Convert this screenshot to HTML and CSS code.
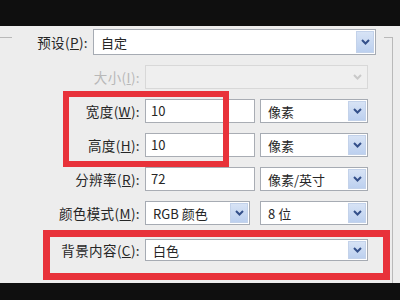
FILE: index.html
```html
<!DOCTYPE html>
<html lang="zh-CN">
<head>
    <meta charset="UTF-8">
    <title>新建</title>
    <link rel="stylesheet" href="styles.css">
</head>
<body>
    <div class="screen">
        <div class="bar"></div>

        <div class="dialog">
            <!-- 分组框边线 -->
            <div class="group-line"></div>

            <div class="row row-preset">
                <label class="label">预设(<u>P</u>):</label>
                <div class="select">
                    <span class="value">自定</span>
                    <span class="arrow"><svg width="9" height="6" viewBox="0 0 9 6"><path d="M1 1 L4.5 4.5 L8 1" /></svg></span>
                </div>
            </div>

            <div class="row">
                <label class="label disabled">大小(<u>I</u>):</label>
                <div class="select wide disabled">
                    <span class="value"></span>
                    <span class="arrow"><svg width="9" height="6" viewBox="0 0 9 6"><path d="M1 1 L4.5 4.5 L8 1" /></svg></span>
                </div>
            </div>

            <div class="row">
                <label class="label">宽度(<u>W</u>):</label>
                <div class="input">10</div>
                <div class="select unit">
                    <span class="value">像素</span>
                    <span class="arrow"><svg width="9" height="6" viewBox="0 0 9 6"><path d="M1 1 L4.5 4.5 L8 1" /></svg></span>
                </div>
            </div>

            <div class="row">
                <label class="label">高度(<u>H</u>):</label>
                <div class="input">10</div>
                <div class="select unit">
                    <span class="value">像素</span>
                    <span class="arrow"><svg width="9" height="6" viewBox="0 0 9 6"><path d="M1 1 L4.5 4.5 L8 1" /></svg></span>
                </div>
            </div>

            <div class="row">
                <label class="label">分辨率(<u>R</u>):</label>
                <div class="input">72</div>
                <div class="select unit">
                    <span class="value">像素/英寸</span>
                    <span class="arrow"><svg width="9" height="6" viewBox="0 0 9 6"><path d="M1 1 L4.5 4.5 L8 1" /></svg></span>
                </div>
            </div>

            <div class="row">
                <label class="label">颜色模式(<u>M</u>):</label>
                <div class="select mode">
                    <span class="value">RGB 颜色</span>
                    <span class="arrow"><svg width="9" height="6" viewBox="0 0 9 6"><path d="M1 1 L4.5 4.5 L8 1" /></svg></span>
                </div>
                <div class="select unit">
                    <span class="value">8 位</span>
                    <span class="arrow"><svg width="9" height="6" viewBox="0 0 9 6"><path d="M1 1 L4.5 4.5 L8 1" /></svg></span>
                </div>
            </div>

            <div class="row row-bg">
                <label class="label">背景内容(<u>C</u>):</label>
                <div class="select wide">
                    <span class="value">白色</span>
                    <span class="arrow"><svg width="9" height="6" viewBox="0 0 9 6"><path d="M1 1 L4.5 4.5 L8 1" /></svg></span>
                </div>
            </div>

            <!-- 红色标注框 -->
            <div class="mark mark-size"></div>
            <div class="mark mark-bg"></div>
        </div>

        <div class="bar bar-bottom"></div>
    </div>
</body>
</html>
```

FILE: styles.css
```css
* {
    box-sizing: border-box;
    margin: 0;
    padding: 0;
}

body {
    background: #0f0f0f;
    font-family: "Noto Sans CJK SC", "Noto Sans", sans-serif;
    font-size: 13px;
    color: #262626;
}

/* 画面：上黑边 / 对话框 / 下黑边 */
.screen {
    width: 400px;
    height: 300px;
    display: flex;
    flex-direction: column;
    overflow: hidden;
}

.bar {
    height: 26px;
    flex: none;
    background: #0f0f0f;
}

.bar-bottom {
    height: 17px;
}

/* 对话框主体 */
.dialog {
    position: relative;
    height: 257px;
    flex: none;
    background: #ededed;
    padding-top: 3px;
    display: flex;
    flex-direction: column;
    gap: 10px;
    overflow: hidden;
}

.group-line {
    position: absolute;
    top: 11px;
    left: 0;
    width: 393px;
    height: 260px;
    border-right: 1px solid #b9b9b9;
}

.group-line::before,
.group-line::after {
    content: "";
    position: absolute;
    top: 0;
    height: 1px;
    background: #b9b9b9;
}

.group-line::before {
    left: 0;
    width: 12px;
}

.group-line::after {
    left: 384px;
    width: 9px;
}

/* 表单行 */
.row {
    display: flex;
    align-items: center;
    height: 24px;
    flex: none;
}

.row-preset {
    height: 26px;
}

.row-bg {
    height: 22px;
    margin-top: 4px;
}

.label {
    width: 140px;
    text-align: right;
    font-size: 13.5px;
    letter-spacing: 0.4px;
    margin-right: 5px;
    white-space: nowrap;
}

.row-preset .label {
    width: 88px;
}

.label u {
    text-underline-offset: 1px;
}

.label.disabled {
    color: #b8b8b8;
}

/* 输入框 */
.input {
    width: 110px;
    height: 100%;
    background: #fff;
    border: 1px solid #a9adb4;
    padding: 0 5px;
    line-height: 22px;
    margin-right: 5px;
}

/* 下拉框 */
.select {
    height: 100%;
    display: flex;
    align-items: stretch;
    background: #fff;
    border: 1px solid #a6abb3;
}

.row-preset .select {
    width: 283px;
}

.select.wide {
    width: 223px;
}

.select.unit {
    width: 108px;
}

.select.mode {
    width: 105px;
    margin-right: 10px;
}

.select .value {
    flex: 1;
    display: flex;
    align-items: center;
    padding-left: 7px;
    white-space: nowrap;
}

.select .arrow {
    width: 18px;
    margin: 1px;
    display: flex;
    align-items: center;
    justify-content: center;
    background: linear-gradient(#d7e3f5, #bcd0ef);
    border: 1px solid #c3d2ea;
}

.select .arrow path {
    fill: none;
    stroke: #34508a;
    stroke-width: 2;
}

.select.disabled {
    background: #efefef;
    border-color: #d8d8d8;
}

.select.disabled .arrow {
    background: #efefef;
    border-color: #efefef;
}

.select.disabled .arrow path {
    stroke: #c9c9c9;
}

/* 红色标注框 */
.mark {
    position: absolute;
    border: 6px solid #e8323a;
}

.mark-size {
    left: 63px;
    top: 65px;
    width: 166px;
    height: 76px;
}

.mark-bg {
    left: 43px;
    top: 204px;
    width: 347px;
    height: 50px;
    border-width: 7px;
}
```
